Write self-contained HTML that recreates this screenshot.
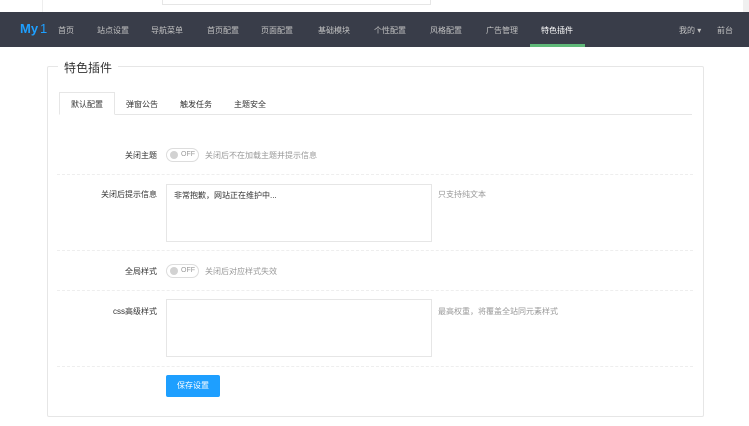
<!DOCTYPE html>
<html><head><meta charset="utf-8"><style>
*{margin:0;padding:0;box-sizing:border-box}
body{width:749px;height:426px;background:#fff;font-family:"Liberation Sans","Noto Sans CJK SC",sans-serif;font-size:8px;color:#333;position:relative;overflow:hidden}
.a{position:absolute}
.nav{left:0;top:12px;width:749px;height:35px;background:#393d49}
.nav span{position:absolute;top:13px;color:#c2c2c2;font-size:8px}
.sep{height:1px;border-top:1px dashed #eee;left:57px;width:636px}
.lbl{font-size:8px;color:#333;text-align:right;width:100px;left:57px}
.sw{width:33px;height:14px;border:1px solid #ddd;border-radius:8px;left:166px}
.sw i{position:absolute;left:3px;top:2px;width:8px;height:8px;border-radius:50%;background:#d2d2d2}
.sw b{position:absolute;left:14px;top:0;line-height:12px;font-weight:normal;font-size:7px;color:#999}
.tip{color:#999;font-size:8px}
.ta{border:1px solid #e6e6e6;left:166px;width:266px}
</style></head><body>
<div class="a" style="left:42px;top:0;width:1px;height:12px;background:#eee"></div>
<div class="a" style="left:162px;top:0;width:269px;height:5px;border:1px solid #e6e6e6;border-top:none"></div>
<div class="a" style="left:743px;top:0;width:6px;height:12px;background:#f0f0f0"></div>
<div class="a nav">
<span style="left:20px;top:9px;color:#1e9fff;font-weight:bold;font-size:13px">My</span><span style="left:40px;top:9px;color:#1e9fff;font-size:13px">1</span>
<span style="left:58px">首页</span><span style="left:97px">站点设置</span><span style="left:151px">导航菜单</span><span style="left:207px">首页配置</span><span style="left:261px">页面配置</span><span style="left:318px">基础模块</span><span style="left:374px">个性配置</span><span style="left:430px">风格配置</span><span style="left:486px">广告管理</span><span style="left:541px;color:#fff">特色插件</span>
<span style="left:679px">我的 ▾</span><span style="left:717px">前台</span>
<div style="position:absolute;left:530px;top:32px;width:55px;height:3px;background:#5fb878"></div>
</div>
<div class="a" style="left:47px;top:66px;width:657px;height:351px;border:1px solid #e6e6e6;border-radius:2px"></div>
<div class="a" style="left:58px;top:59px;padding:0 6px;background:#fff;font-size:12px;color:#333">特色插件</div>
<div class="a" style="left:59px;top:114px;width:633px;height:1px;background:#e6e6e6"></div>
<div class="a" style="left:59px;top:92px;width:56px;height:23px;border:1px solid #e6e6e6;border-bottom:1px solid #fff;background:#fff"></div>
<div class="a" style="left:71px;top:99px">默认配置</div>
<div class="a" style="left:126px;top:99px">弹窗公告</div>
<div class="a" style="left:180px;top:99px">触发任务</div>
<div class="a" style="left:234px;top:99px">主题安全</div>

<div class="a lbl" style="top:150px">关闭主题</div>
<div class="a sw" style="top:148px"><i></i><b>OFF</b></div>
<div class="a tip" style="left:205px;top:150px">关闭后不在加载主题并提示信息</div>
<div class="a sep" style="top:174px"></div>
<div class="a lbl" style="top:189px">关闭后提示信息</div>
<div class="a ta" style="top:184px;height:58px;padding:5px 7px;color:#333">非常抱歉，网站正在维护中...</div>
<div class="a tip" style="left:438px;top:189px">只支持纯文本</div>
<div class="a sep" style="top:250px"></div>
<div class="a lbl" style="top:266px">全局样式</div>
<div class="a sw" style="top:264px"><i></i><b>OFF</b></div>
<div class="a tip" style="left:205px;top:266px">关闭后对应样式失效</div>
<div class="a sep" style="top:290px"></div>
<div class="a lbl" style="top:306px">css高级样式</div>
<div class="a ta" style="top:299px;height:58px"></div>
<div class="a tip" style="left:438px;top:306px">最高权重，将覆盖全站同元素样式</div>
<div class="a sep" style="top:366px"></div>
<div class="a" style="left:166px;top:375px;width:54px;height:22px;background:#1e9fff;border-radius:2px;color:#fff;text-align:center;line-height:22px">保存设置</div>
</body></html>
